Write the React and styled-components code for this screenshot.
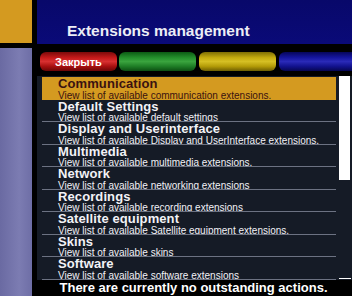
import React from "react";
import styled, { createGlobalStyle } from "styled-components";

const GlobalStyle = createGlobalStyle`
  html, body {
    margin: 0;
    padding: 0;
    background: #000;
    overflow: hidden;
  }
  body {
    font-family: "Liberation Sans", Arial, sans-serif;
  }
`;

const extensions = [
  { title: "Communication", text: "View list of available communication extensions." },
  { title: "Default Settings", text: "View list of available default settings" },
  { title: "Display and Userinterface", text: "View list of available Display and UserInterface extensions." },
  { title: "Multimedia", text: "View list of available multimedia extensions." },
  { title: "Network", text: "View list of available networking extensions" },
  { title: "Recordings", text: "View list of available recording extensions" },
  { title: "Satellite equipment", text: "View list of available Satellite equipment extensions." },
  { title: "Skins", text: "View list of available skins" },
  { title: "Software", text: "View list of available software extensions" },
];

const buttons = [
  { color: "red", label: "Закрыть" },
  { color: "green" },
  { color: "yellow" },
  { color: "blue" },
];

const gradients = {
  red: "linear-gradient(#7a0a0a 0%, #c41a1a 30%, #d83030 50%, #a81010 75%, #6a0606 100%)",
  green: "linear-gradient(#0c5a14 0%, #24902c 30%, #3aa43e 50%, #1f7e26 75%, #0c4e12 100%)",
  yellow: "linear-gradient(#7e6e04 0%, #c4ac0e 30%, #d6c024 50%, #b49c08 75%, #6e5e02 100%)",
  blue: "linear-gradient(#06065a 0%, #1616a0 30%, #2a2ab8 50%, #12128e 75%, #060650 100%)",
};

const Screen = styled.div`
  display: flex;
  width: 352px;
  height: 296px;
  background: #000;
  overflow: hidden;
`;

const Sidebar = styled.div`
  display: flex;
  flex-direction: column;
  width: 32px;
  margin-right: 5px;
`;

const SideTop = styled.div`
  height: 43px;
  background: #d49a20;
`;

const SideBottom = styled.div`
  flex: 1;
  margin-top: 5px;
  background: linear-gradient(90deg, #6a6aa2 0%, #7c7cb2 60%, #6e6ea6 100%);
`;

const Main = styled.div`
  flex: 1;
  display: flex;
  flex-direction: column;
  overflow: hidden;
`;

const Header = styled.div`
  height: 44px;
  display: flex;
  align-items: flex-end;
  padding-left: 30px;
  background: linear-gradient(#08086a, #0a0a78);
`;

const Title = styled.h1`
  margin: 0 0 4px;
  font-size: 15.5px;
  font-weight: bold;
  line-height: 18px;
  color: #ecedf6;
`;

const ButtonBar = styled.div`
  display: flex;
  gap: 2px;
  height: 19px;
  margin-top: 8px;
  padding-left: 3px;
`;

const ColorButton = styled.div`
  flex: none;
  width: ${(p) => (p.$color === "blue" ? "90px" : "77px")};
  margin-left: ${(p) => (p.$color === "blue" || p.$color === "yellow" ? "1px" : "0")};
  border-radius: 6px;
  background: ${(p) => gradients[p.$color]};
  display: flex;
  align-items: center;
  justify-content: center;
  color: #fff;
  font-size: 11px;
  font-weight: bold;
`;

const ListArea = styled.div`
  display: flex;
  margin-top: 5px;
  height: 204px;
  background: #151b26;
`;

const List = styled.div`
  width: 294px;
  margin-left: 5px;
  padding-top: 1px;
`;

const Row = styled.div`
  box-sizing: border-box;
  height: 22.5px;
  padding: 1px 0 0 16px;
  border-bottom: 1px solid ${(p) => (p.$selected ? "#d49a20" : "#6c7282")};
  background: ${(p) => (p.$selected ? "#d49a20" : "transparent")};
  color: ${(p) => (p.$selected ? "#3a1210" : "#f2f2f6")};
  white-space: nowrap;
  overflow: hidden;
`;

const RowTitle = styled.div`
  font-size: 13px;
  font-weight: bold;
  line-height: 12.5px;
  letter-spacing: 0.1px;
`;

const RowText = styled.div`
  font-size: 10px;
  line-height: 9px;
`;

const ScrollTrack = styled.div`
  display: flex;
  flex-direction: column;
  justify-content: space-between;
  width: 12px;
  margin-left: 3px;
`;

const ScrollThumb = styled.div`
  width: 11px;
  height: 104px;
  background: #fff;
`;

const ScrollEnd = styled.div`
  height: 1px;
  margin-bottom: 1px;
  background: #fff;
`;

const Footer = styled.div`
  text-align: center;
  color: #fff;
  font-size: 13px;
  font-weight: bold;
  line-height: 16px;
  padding-right: 2px;
`;

export default function App() {
  return (
    <>
      <GlobalStyle />
      <Screen>
        <Sidebar>
          <SideTop />
          <SideBottom />
        </Sidebar>
        <Main>
          <Header>
            <Title>Extensions management</Title>
          </Header>
          <ButtonBar>
            {buttons.map((b) => (
              <ColorButton key={b.color} $color={b.color}>
                {b.label}
              </ColorButton>
            ))}
          </ButtonBar>
          <ListArea>
            <List>
              {extensions.map((e, i) => (
                <Row key={e.title} $selected={i === 0}>
                  <RowTitle>{e.title}</RowTitle>
                  <RowText>{e.text}</RowText>
                </Row>
              ))}
            </List>
            <ScrollTrack>
              <ScrollThumb />
              <ScrollEnd />
            </ScrollTrack>
          </ListArea>
          <Footer>There are currently no outstanding actions.</Footer>
        </Main>
      </Screen>
    </>
  );
}
